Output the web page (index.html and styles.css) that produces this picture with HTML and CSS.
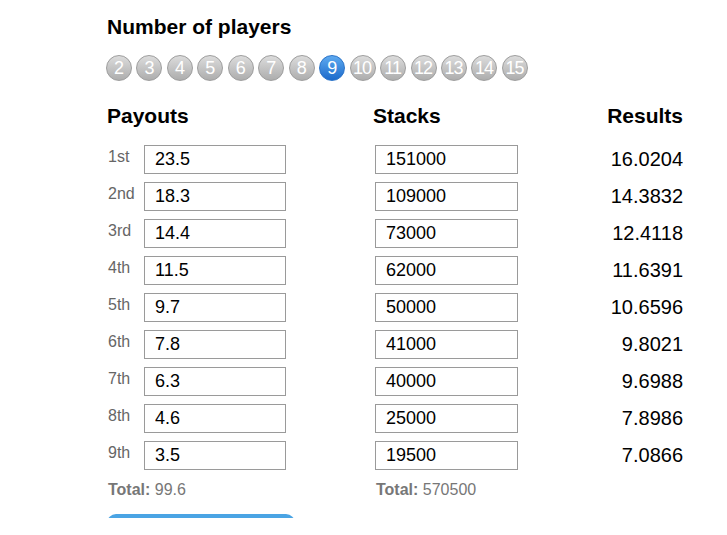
FILE: index.html
```html
<!DOCTYPE html>
<html>
<head>
  <title>ICM Calculator</title>
  <link rel="stylesheet" href="styles.css">
</head>
<body>
  <div class="page">
    <h2>Number of players</h2>
    <div class="players">
      <span class="pl">2</span>
      <span class="pl">3</span>
      <span class="pl">4</span>
      <span class="pl">5</span>
      <span class="pl">6</span>
      <span class="pl">7</span>
      <span class="pl">8</span>
      <span class="pl active">9</span>
      <span class="pl">10</span>
      <span class="pl">11</span>
      <span class="pl">12</span>
      <span class="pl">13</span>
      <span class="pl">14</span>
      <span class="pl">15</span>
    </div>

    <div class="table">
      <h3 class="h-pay">Payouts</h3>
      <h3 class="h-stack">Stacks</h3>
      <h3 class="h-res">Results</h3>

      <span class="place">1st</span><input class="inp" type="text" value="23.5"><span></span><input class="inp" type="text" value="151000"><span class="res">16.0204</span>
      <span class="place">2nd</span><input class="inp" type="text" value="18.3"><span></span><input class="inp" type="text" value="109000"><span class="res">14.3832</span>
      <span class="place">3rd</span><input class="inp" type="text" value="14.4"><span></span><input class="inp" type="text" value="73000"><span class="res">12.4118</span>
      <span class="place">4th</span><input class="inp" type="text" value="11.5"><span></span><input class="inp" type="text" value="62000"><span class="res">11.6391</span>
      <span class="place">5th</span><input class="inp" type="text" value="9.7"><span></span><input class="inp" type="text" value="50000"><span class="res">10.6596</span>
      <span class="place">6th</span><input class="inp" type="text" value="7.8"><span></span><input class="inp" type="text" value="41000"><span class="res">9.8021</span>
      <span class="place">7th</span><input class="inp" type="text" value="6.3"><span></span><input class="inp" type="text" value="40000"><span class="res">9.6988</span>
      <span class="place">8th</span><input class="inp" type="text" value="4.6"><span></span><input class="inp" type="text" value="25000"><span class="res">7.8986</span>
      <span class="place">9th</span><input class="inp" type="text" value="3.5"><span></span><input class="inp" type="text" value="19500"><span class="res">7.0866</span>

      <div class="total t-pay"><b>Total:</b> 99.6</div>
      <div class="total t-stack"><b>Total:</b> 570500</div>
    </div>

    <button class="calc" aria-label="Calculate"></button>
  </div>
</body>
</html>
```

FILE: styles.css
```css
body {
  margin: 0;
  font-family: 'Liberation Sans', Arial, Helvetica, sans-serif;
  background: #fff;
  color: #000;
}

.page {
  height: 518px;
  overflow: hidden;
  padding-left: 107px;
  width: 576px;
}

h2 {
  margin: 0;
  padding-top: 14px;
  font-size: 21px;
  line-height: 26px;
  font-weight: bold;
}

.players {
  display: flex;
  gap: 4.46px;
  margin-top: 15px;
  margin-left: -1px;
}

.pl {
  width: 24px;
  height: 24px;
  border-radius: 50%;
  border: 1px solid #9d9d9d;
  background: linear-gradient(#dcdcdc, #adadad);
  color: #fff;
  font-size: 18px;
  line-height: 24px;
  text-align: center;
  letter-spacing: -1px;
  text-indent: -1px;
}

.pl.active {
  border-color: #2a73c8;
  background: linear-gradient(#5eaaf0, #1c6acb);
}

.table {
  display: grid;
  grid-template-columns: 37px 142px 89px 143px 1fr;
  grid-template-rows: 34px;
  grid-auto-rows: 29px;
  row-gap: 8px;
  margin-top: 22px;
}

h3 {
  margin: 0;
  font-size: 21px;
  line-height: 26px;
  font-weight: bold;
}

.h-pay { grid-column: 1 / 3; }
.h-stack { grid-column: 4; margin-left: -2px; }
.h-res { grid-column: 5; text-align: right; }

.place {
  font-size: 16px;
  color: #666;
  padding-top: 3px;
  padding-left: 1px;
}

.inp {
  box-sizing: border-box;
  width: 100%;
  height: 29px;
  margin: 0;
  padding: 0 0 0 10px;
  border: 1px solid #9a9a9a;
  font-family: inherit;
  font-size: 18px;
  color: #000;
  background: #fff;
  outline: none;
}

.res {
  text-align: right;
  font-size: 20px;
  line-height: 29px;
}

.total {
  font-size: 16px;
  color: #777;
  line-height: 20px;
  padding-top: 2px;
  padding-left: 1px;
}

.t-pay { grid-column: 1 / 3; }
.t-stack { grid-column: 4 / 6; }

.calc {
  display: block;
  margin-top: 7px;
  width: 188px;
  height: 40px;
  border: none;
  border-radius: 9px;
  background: #4aa4e4;
}
```
